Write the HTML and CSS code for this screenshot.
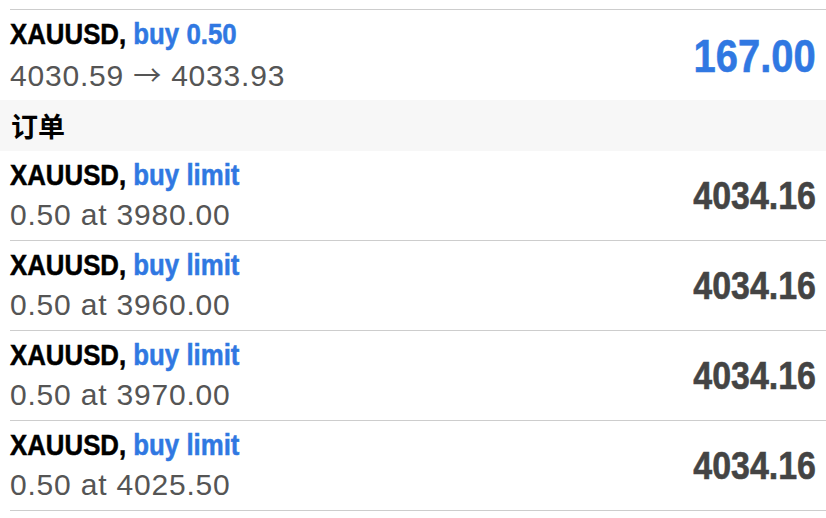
FILE: index.html
```html
<!DOCTYPE html>
<html lang="zh-CN">
<head>
    <meta charset="UTF-8">
    <title>交易</title>
    <link rel="stylesheet" href="styles.css">
</head>
<body>
    <div class="list">
        <div class="row position">
            <div class="info">
                <div class="title"><span class="symbol">XAUUSD,</span> <span class="type">buy 0.50</span></div>
                <div class="sub">4030.59 <span class="arrow">→</span> 4033.93</div>
            </div>
            <div class="value profit">167.00</div>
        </div>

        <div class="section">订单</div>

        <div class="row">
            <div class="info">
                <div class="title"><span class="symbol">XAUUSD,</span> <span class="type">buy limit</span></div>
                <div class="sub">0.50 at 3980.00</div>
            </div>
            <div class="value">4034.16</div>
        </div>
        <div class="row">
            <div class="info">
                <div class="title"><span class="symbol">XAUUSD,</span> <span class="type">buy limit</span></div>
                <div class="sub">0.50 at 3960.00</div>
            </div>
            <div class="value">4034.16</div>
        </div>
        <div class="row">
            <div class="info">
                <div class="title"><span class="symbol">XAUUSD,</span> <span class="type">buy limit</span></div>
                <div class="sub">0.50 at 3970.00</div>
            </div>
            <div class="value">4034.16</div>
        </div>
        <div class="row">
            <div class="info">
                <div class="title"><span class="symbol">XAUUSD,</span> <span class="type">buy limit</span></div>
                <div class="sub">0.50 at 4025.50</div>
            </div>
            <div class="value">4034.16</div>
        </div>
    </div>
</body>
</html>
```

FILE: styles.css
```css
body {
    margin: 0;
    background: #fff;
    font-family: 'Liberation Sans', Arial, sans-serif;
    color: #000;
}
.list {
    padding-top: 9px;
}
.row {
    display: flex;
    justify-content: space-between;
    align-items: center;
    height: 89px;
    margin-left: 10px;
    padding-right: 10px;
    border-bottom: 1px solid #cdcdcd;
}
.row.position {
    border-top: 1px solid #cdcdcd;
    border-bottom: none;
    height: 90px;
}
.info {
    align-self: flex-start;
    padding-top: 4px;
}
/* condensed look: the page font has no narrow cut */
.title {
    font-weight: bold;
    font-size: 29px;
    line-height: 40px;
    white-space: nowrap;
    -webkit-text-stroke: 0.5px currentColor;
    transform: scaleX(0.89);
    transform-origin: left center;
}
.type {
    color: #3078e2;
}
.sub {
    font-size: 30px;
    line-height: 40px;
    letter-spacing: 0.8px;
    color: #555;
    white-space: nowrap;
}
.arrow {
    font-family: 'Noto Sans CJK SC', sans-serif;
    font-size: 28px;
}
.value {
    font-weight: bold;
    font-size: 39px;
    line-height: 1;
    color: #444;
    -webkit-text-stroke: 0.6px currentColor;
    transform: scaleX(0.87);
    transform-origin: right center;
}
.value.profit {
    font-size: 47px;
    color: #3078e2;
    transform: scaleX(0.85);
}
.section {
    background: #f7f7f7;
    height: 51px;
    padding-left: 11px;
    font-family: 'Noto Sans CJK SC', sans-serif;
    font-size: 27px;
    font-weight: bold;
    line-height: 51px;
}
```
